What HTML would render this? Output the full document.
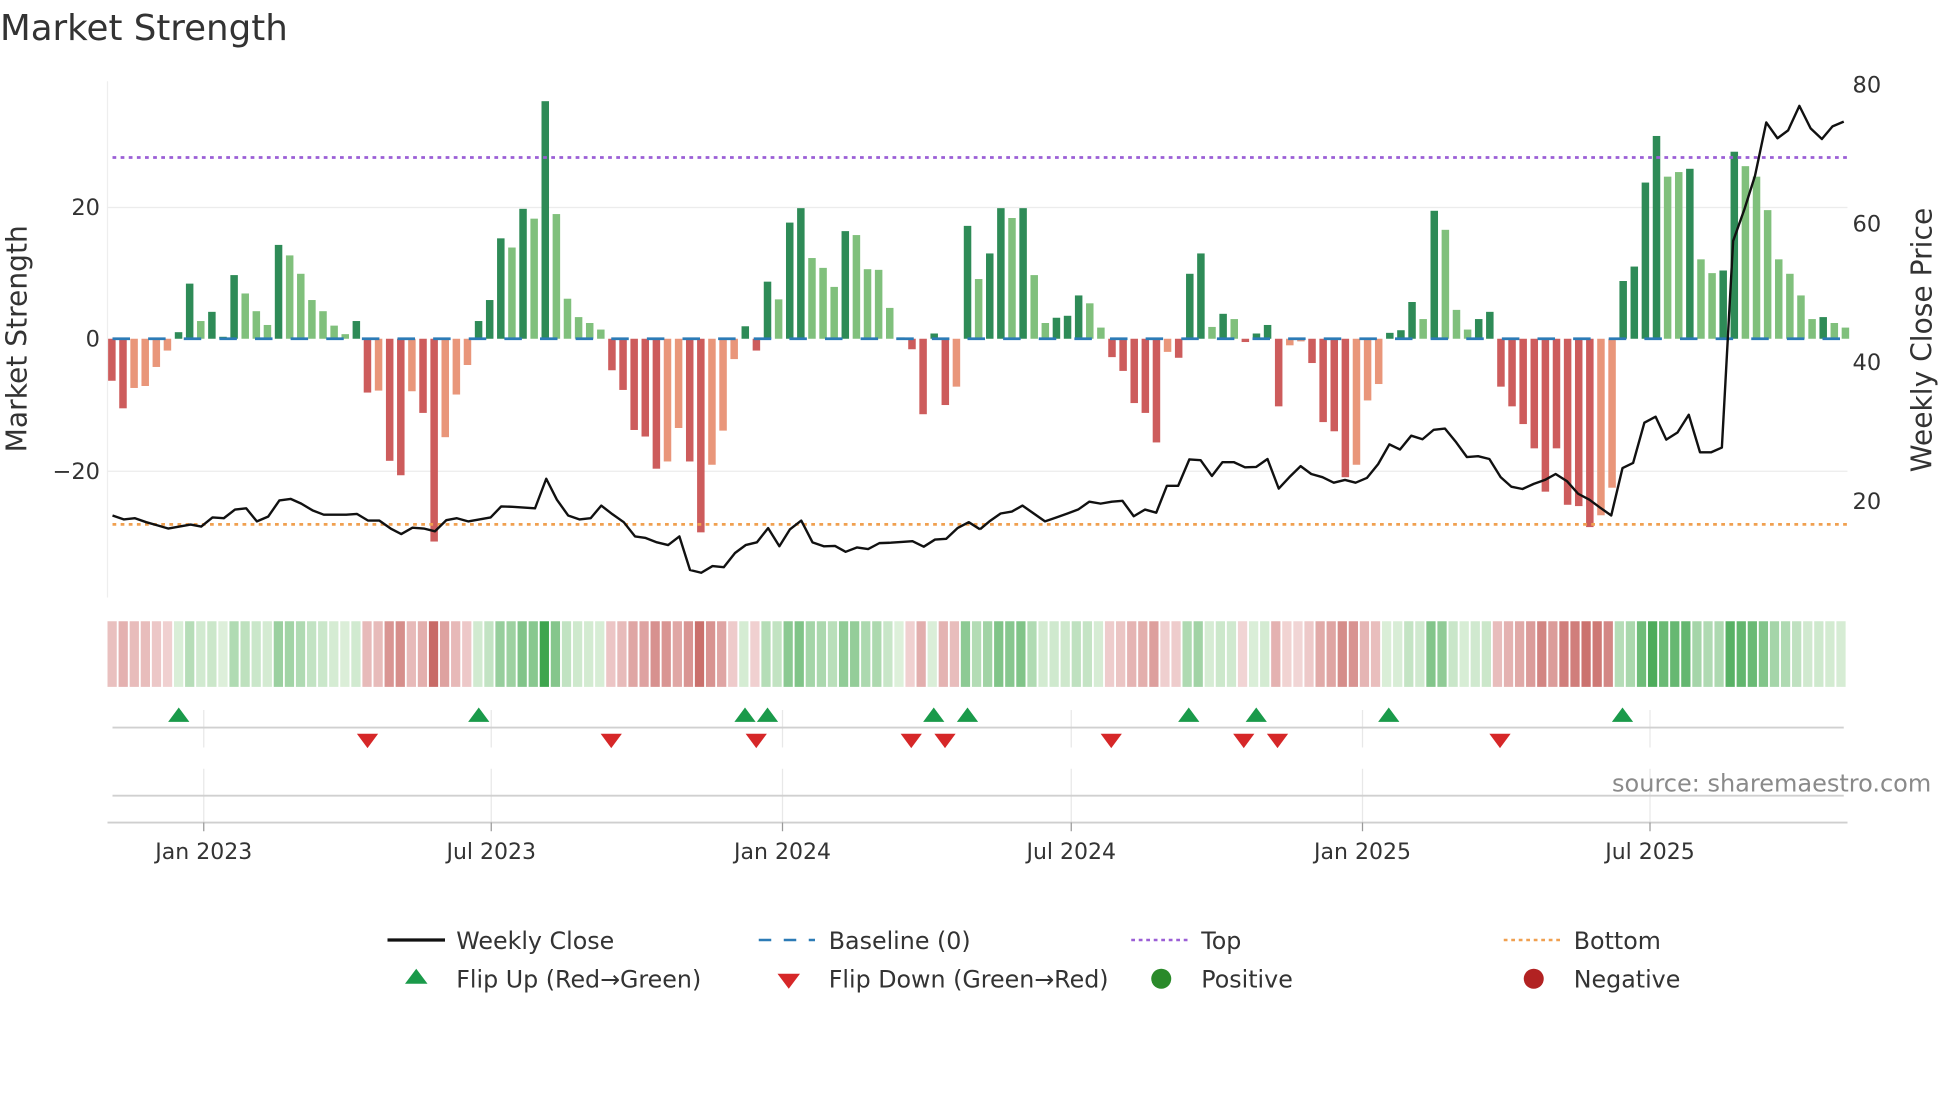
<!DOCTYPE html>
<html><head><meta charset="utf-8"><style>
html,body{margin:0;padding:0;background:#fff;}
svg{display:block;}
text{font-family:"DejaVu Sans","Liberation Sans",sans-serif;fill:#333;}
</style></head><body>
<svg id="s" width="1960" height="1102" viewBox="0 0 1568 881.6" preserveAspectRatio="none" xmlns="http://www.w3.org/2000/svg">
<rect width="1568" height="881.6" fill="#fff"/>
<text x="0" y="32" font-size="28.5">Market Strength</text>
<line x1="86" y1="65" x2="86" y2="478" stroke="#eee" stroke-width="1"/>
<line x1="86" y1="166" x2="1478" y2="166" stroke="#ececec" stroke-width="1"/>
<line x1="86" y1="377" x2="1478" y2="377" stroke="#ececec" stroke-width="1"/>
<g id="bars"></g>
<line x1="90" y1="271" x2="1478" y2="271" stroke="#2c7bb6" stroke-width="2.2" stroke-dasharray="14 14.5"/>
<line x1="90" y1="126" x2="1478" y2="126" stroke="#9b5fd6" stroke-width="2.2" stroke-dasharray="3 3.5"/>
<line x1="90" y1="419.5" x2="1478" y2="419.5" stroke="#f0a050" stroke-width="2.2" stroke-dasharray="3 3.5"/>
<g transform="scale(0.5,0.316)">
<polyline fill="none" stroke="#111" stroke-width="2.4" vector-effect="non-scaling-stroke" stroke-linejoin="round" points="180,1305 198,1315 216,1312 234,1322 252,1330 269,1338 287,1333 305,1328 322,1333 340,1310 358,1312 376,1290 394,1287 411,1320 429,1308 447,1267 465,1263 482,1275 500,1292 518,1303 536,1303 554,1303 571,1301 589,1318 607,1318 625,1338 642,1352 660,1336 678,1338 696,1345 714,1317 731,1312 749,1320 767,1315 785,1310 802,1282 820,1283 838,1285 856,1287 874,1212 891,1265 909,1305 927,1315 945,1312 962,1280 980,1302 998,1322 1016,1358 1033,1362 1051,1373 1069,1380 1087,1358 1104,1443 1122,1450 1140,1433 1158,1436 1176,1400 1193,1380 1211,1373 1229,1337 1247,1383 1264,1340 1282,1318 1300,1373 1318,1383 1336,1382 1353,1397 1371,1386 1389,1390 1407,1375 1425,1374 1443,1372 1460,1370 1478,1384 1496,1366 1514,1364 1532,1337 1550,1322 1568,1340"/>
</g>
<g transform="translate(784,0) scale(0.5,0.316)">
<polyline fill="none" stroke="#111" stroke-width="2.4" vector-effect="non-scaling-stroke" stroke-linejoin="round" points="0,1340 15,1320 33,1300 51,1295 68,1280 86,1300 104,1320 122,1310 140,1300 157,1290 175,1270 193,1275 211,1270 228,1268 246,1307 264,1290 282,1298 299,1230 317,1230 335,1163 353,1165 371,1205 388,1170 406,1170 424,1183 442,1182 460,1162 478,1237 495,1208 513,1180 530,1200 548,1208 566,1222 584,1215 601,1222 619,1210 637,1175 655,1125 672,1138 690,1103 708,1112 726,1088 744,1085 762,1120 779,1157 797,1155 815,1162 833,1208 850,1232 868,1238 886,1225 904,1215 921,1200 939,1218 957,1250 975,1265 992,1285 1010,1305 1028,1185 1045,1172 1063,1070 1081,1055 1098,1113 1116,1095 1134,1050 1152,1145 1170,1145 1187,1133 1205,610 1223,530 1240,445 1258,310 1276,350 1293,330 1311,268 1329,325 1347,352 1364,320 1382,308"/>
</g>
<g font-size="18" text-anchor="end">
<text x="80" y="172">20</text><text x="80" y="277">0</text><text x="80" y="383">−20</text>
</g>
<g font-size="18">
<text x="1482" y="74">80</text><text x="1482" y="185">60</text><text x="1482" y="296">40</text><text x="1482" y="407">20</text>
</g>
<text transform="translate(21,271) rotate(-90)" text-anchor="middle" font-size="22.5">Market Strength</text>
<text transform="translate(1545,272) rotate(-90)" text-anchor="middle" font-size="22.5">Weekly Close Price</text>
<g id="heat"></g>
<g stroke="#e8e8e8" stroke-width="1">
<line x1="163" y1="568" x2="163" y2="598"/><line x1="393" y1="568" x2="393" y2="598"/><line x1="626" y1="568" x2="626" y2="598"/><line x1="857" y1="568" x2="857" y2="598"/><line x1="1090" y1="568" x2="1090" y2="598"/><line x1="1320" y1="568" x2="1320" y2="598"/>
<line x1="163" y1="615" x2="163" y2="658"/><line x1="393" y1="615" x2="393" y2="658"/><line x1="626" y1="615" x2="626" y2="658"/><line x1="857" y1="615" x2="857" y2="658"/><line x1="1090" y1="615" x2="1090" y2="658"/><line x1="1320" y1="615" x2="1320" y2="658"/>
</g>
<line x1="90" y1="582" x2="1475" y2="582" stroke="#d0d0d0" stroke-width="1.5"/>
<line x1="90" y1="636.5" x2="1475" y2="636.5" stroke="#d0d0d0" stroke-width="1.5"/>
<line x1="86" y1="658" x2="1478" y2="658" stroke="#cfcfcf" stroke-width="1.5"/>
<g stroke="#999" stroke-width="1">
<line x1="163" y1="658" x2="163" y2="665"/><line x1="393" y1="658" x2="393" y2="665"/><line x1="626" y1="658" x2="626" y2="665"/><line x1="857" y1="658" x2="857" y2="665"/><line x1="1090" y1="658" x2="1090" y2="665"/><line x1="1320" y1="658" x2="1320" y2="665"/>
</g>
<g id="flips"></g>
<text x="1545" y="633" text-anchor="end" font-size="19.2" style="fill:#8a8a8a">source: sharemaestro.com</text>
<g font-size="17.6" text-anchor="middle">
<text x="163" y="687">Jan 2023</text><text x="393" y="687">Jul 2023</text><text x="626" y="687">Jan 2024</text><text x="857" y="687">Jul 2024</text><text x="1090" y="687">Jan 2025</text><text x="1320" y="687">Jul 2025</text>
</g>
<g font-size="19">
<line x1="310" y1="752" x2="356" y2="752" stroke="#111" stroke-width="2.6"/>
<text x="365" y="759">Weekly Close</text>
<line x1="607" y1="752" x2="652" y2="752" stroke="#2c7bb6" stroke-width="2" stroke-dasharray="10 10"/>
<text x="663" y="759">Baseline (0)</text>
<line x1="905" y1="752" x2="950" y2="752" stroke="#9b5fd6" stroke-width="2" stroke-dasharray="3 3"/>
<text x="961" y="759">Top</text>
<line x1="1203" y1="752" x2="1248" y2="752" stroke="#f0a050" stroke-width="2" stroke-dasharray="3 3"/>
<text x="1259" y="759">Bottom</text>
<polygon points="333,775 324,787 342,787" fill="#1a9a4a"/>
<text x="365" y="790">Flip Up (Red→Green)</text>
<polygon points="622,779 640,779 631,791" fill="#d62728"/>
<text x="663" y="790">Flip Down (Green→Red)</text>
<circle cx="929" cy="783" r="8" fill="#2a8a2a"/>
<text x="961" y="790">Positive</text>
<circle cx="1227" cy="783" r="8" fill="#b22222"/>
<text x="1259" y="790">Negative</text>
</g>
</svg>
<script>
var v=[-6.4,-10.6,-7.5,-7.2,-4.3,-1.8,1,8.4,2.7,4.1,0.3,9.7,6.9,4.2,2.1,14.3,12.7,9.9,5.9,4.2,2,0.7,2.7,-8.2,-7.9,-18.6,-20.8,-8,-11.3,-30.9,-15,-8.5,-4,2.7,5.9,15.3,13.9,19.8,18.3,36.2,19,6.1,3.3,2.4,1.4,-4.8,-7.8,-13.9,-14.9,-19.8,-18.7,-13.6,-18.7,-29.5,-19.2,-14,-3.1,1.9,-1.8,8.7,6,17.7,19.9,12.3,10.8,7.9,16.4,15.8,10.6,10.5,4.7,0.2,-1.6,-11.5,0.8,-10.1,-7.3,17.2,9.1,13,19.9,18.4,19.9,9.7,2.4,3.2,3.5,6.6,5.4,1.7,-2.8,-4.9,-9.8,-11.3,-15.8,-2,-2.9,9.9,13,1.8,3.8,3,-0.5,0.8,2.1,-10.3,-1,-0.4,-3.7,-12.7,-14.1,-21.1,-19.2,-9.4,-6.9,0.9,1.3,5.6,3,19.5,16.6,4.4,1.4,3,4.1,-7.3,-10.3,-13,-16.7,-23.3,-16.7,-25.3,-25.5,-28.7,-26.9,-22.7,8.8,11,23.8,30.9,24.7,25.4,25.9,12.1,10,10.4,28.5,26.3,24.7,19.6,12.1,9.9,6.6,3,3.3,2.4,1.7];
var fl="ddllllddld"+"ddllldllll"+"llddlddldd"+"llldddldld"+"lllllddddd"+"llddlllddd"+"lddllldlll"+"ldddddld"+"lddldllddd"+"lldddddldd"+"dldlddddll"+"ddddlllddd"+"ldlllddddd"+"ddddddlldd"+"ddlldllddl"+"lllllldll";
var NS="http://www.w3.org/2000/svg";
function el(p,t,a){var e=document.createElementNS(NS,t);for(var k in a)e.setAttribute(k,a[k]);p.appendChild(e);return e;}
function mix(a,b,t){return "rgb("+[0,1,2].map(function(i){return Math.round(a[i]+(b[i]-a[i])*t)}).join(",")+")";}
var B=document.getElementById("bars"),H=document.getElementById("heat");
for(var i=0;i<v.length;i++){
 var x=89.5+8.89*i,val=v[i],pos=val>=0,h=Math.abs(val)*5.25;
 var c=fl[i]||"l";
 var col=pos?(c=="d"?"#2e8b57":"#80c07c"):(c=="d"?"#cd5c5c":"#e9967a");
 el(B,"rect",{x:x-3,y:pos?271-h:271,width:6,height:Math.max(h,0.5),fill:col});
 var t=Math.min(Math.abs(val)/34,1);
 var hc=pos?mix([222,240,219],[62,165,78],t):mix([242,214,214],[196,96,92],t);
 el(H,"rect",{x:86+8.866*i,y:497,width:7.4,height:52.5,fill:hc});
}
var F=document.getElementById("flips");
[143,383,596,614,747,774,951,1005,1111,1298].forEach(function(x){el(F,"polygon",{points:(x)+",566 "+(x-8.5)+",577.5 "+(x+8.5)+",577.5",fill:"#1a9a4a"});});
[294,489,605,729,756,889,995,1022,1200].forEach(function(x){el(F,"polygon",{points:(x-8.5)+",587 "+(x+8.5)+",587 "+x+",598.5",fill:"#d62728"});});
</script>
</body></html>
